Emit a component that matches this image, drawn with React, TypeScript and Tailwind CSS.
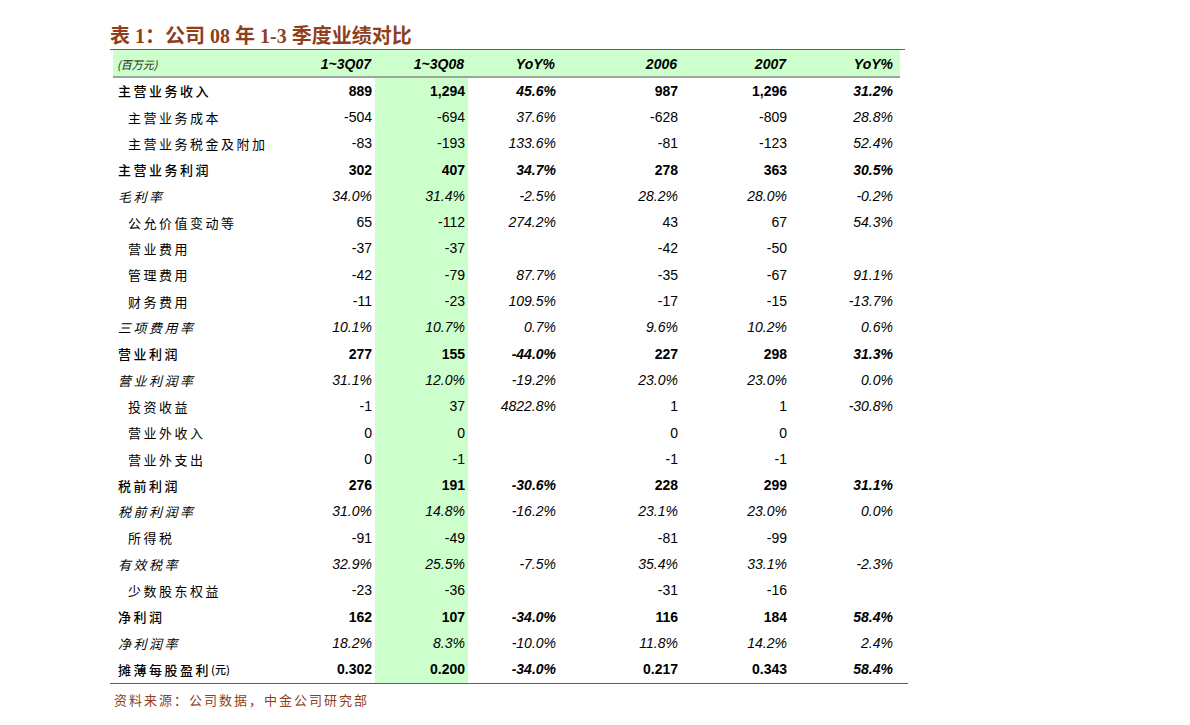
import React from "react";

type Row = { l: string; t: "b" | "n" | "i"; v: string[] };

const rows: Row[] = [
  { l: "主营业务收入", t: "b", v: ["889", "1,294", "45.6%", "987", "1,296", "31.2%"] },
  { l: "主营业务成本", t: "n", v: ["-504", "-694", "37.6%", "-628", "-809", "28.8%"] },
  { l: "主营业务税金及附加", t: "n", v: ["-83", "-193", "133.6%", "-81", "-123", "52.4%"] },
  { l: "主营业务利润", t: "b", v: ["302", "407", "34.7%", "278", "363", "30.5%"] },
  { l: "毛利率", t: "i", v: ["34.0%", "31.4%", "-2.5%", "28.2%", "28.0%", "-0.2%"] },
  { l: "公允价值变动等", t: "n", v: ["65", "-112", "274.2%", "43", "67", "54.3%"] },
  { l: "营业费用", t: "n", v: ["-37", "-37", "", "-42", "-50", ""] },
  { l: "管理费用", t: "n", v: ["-42", "-79", "87.7%", "-35", "-67", "91.1%"] },
  { l: "财务费用", t: "n", v: ["-11", "-23", "109.5%", "-17", "-15", "-13.7%"] },
  { l: "三项费用率", t: "i", v: ["10.1%", "10.7%", "0.7%", "9.6%", "10.2%", "0.6%"] },
  { l: "营业利润", t: "b", v: ["277", "155", "-44.0%", "227", "298", "31.3%"] },
  { l: "营业利润率", t: "i", v: ["31.1%", "12.0%", "-19.2%", "23.0%", "23.0%", "0.0%"] },
  { l: "投资收益", t: "n", v: ["-1", "37", "4822.8%", "1", "1", "-30.8%"] },
  { l: "营业外收入", t: "n", v: ["0", "0", "", "0", "0", ""] },
  { l: "营业外支出", t: "n", v: ["0", "-1", "", "-1", "-1", ""] },
  { l: "税前利润", t: "b", v: ["276", "191", "-30.6%", "228", "299", "31.1%"] },
  { l: "税前利润率", t: "i", v: ["31.0%", "14.8%", "-16.2%", "23.1%", "23.0%", "0.0%"] },
  { l: "所得税", t: "n", v: ["-91", "-49", "", "-81", "-99", ""] },
  { l: "有效税率", t: "i", v: ["32.9%", "25.5%", "-7.5%", "35.4%", "33.1%", "-2.3%"] },
  { l: "少数股东权益", t: "n", v: ["-23", "-36", "", "-31", "-16", ""] },
  { l: "净利润", t: "b", v: ["162", "107", "-34.0%", "116", "184", "58.4%"] },
  { l: "净利润率", t: "i", v: ["18.2%", "8.3%", "-10.0%", "11.8%", "14.2%", "2.4%"] },
  { l: "摊薄每股盈利", t: "b", v: ["0.302", "0.200", "-34.0%", "0.217", "0.343", "58.4%"] },
];

const headers = ["1~3Q07", "1~3Q08", "YoY%", "2006", "2007", "YoY%"];

const cjk = "font-['Noto_Sans_CJK_SC',sans-serif]";
const num = "font-['Liberation_Sans','Noto_Sans_CJK_SC',sans-serif]";

export default function App() {
  return (
    <div className="w-[1190px] h-[725px] bg-white pl-[110px] pt-[21px] text-black">
      <div className="w-[795px] h-[29px] border-b border-[#9c4a24] flex items-start pt-[3px]">
        <div className="font-['Liberation_Serif','Noto_Sans_CJK_SC',serif] font-bold text-[20px] leading-[24px] text-[#8f3f1c]">
          表 1：公司 08 年 1-3 季度业绩对比
        </div>
      </div>
      <div className="w-[798px] border-b border-[#9c4a24] pl-[3px]">
        <div className="grid grid-cols-[167px_95px_93px_91px_122px_109px_110px]">
          <div className={`bg-[#ccffcc] h-[28px] pt-[2px] border-b-2 border-[#9aa89a] flex items-center pl-[4px] italic text-[11px] ${cjk} text-[#222]`}>
            (百万元)
          </div>
          {headers.map((h, i) => (
            <div
              key={i}
              className={`bg-[#ccffcc] h-[28px] pt-[2px] border-b-2 border-[#9aa89a] flex items-center justify-end ${i === 5 ? "pr-[7px]" : "pr-[4px]"} italic font-bold text-[14px] ${num}`}
            >
              {h}
            </div>
          ))}
          {rows.map((r, ri) => (
            <React.Fragment key={ri}>
              <div
                className={`h-[26.3px] flex items-center ${r.t === "n" ? "pl-[15px]" : "pl-[5px]"} ${r.t === "i" ? "italic" : ""} ${r.t === "b" ? "font-medium" : "font-normal"} text-[13px] tracking-[2.5px] ${cjk}`}
              >
                {r.l}
                {ri === rows.length - 1 && <span className="text-[11px] tracking-normal">(元)</span>}
              </div>
              {r.v.map((v, ci) => {
                const isYoy = ci === 2 || ci === 5;
                const italic = r.t === "i" || isYoy;
                const bold = r.t === "b";
                return (
                  <div
                    key={ci}
                    className={`h-[26.3px] flex items-center justify-end ${ci === 5 ? "pr-[7px]" : "pr-[3px]"} ${ci === 1 ? "bg-[#ccffcc]" : ""} ${italic ? "italic" : ""} ${bold ? "font-bold" : ""} text-[14px] ${num}`}
                  >
                    {v}
                  </div>
                );
              })}
            </React.Fragment>
          ))}
        </div>
      </div>
      <div className={`pl-[4px] pt-[8px] text-[13px] leading-[16px] tracking-[2px] text-[#8f3f1c] ${cjk}`}>
        资料来源：公司数据，中金公司研究部
      </div>
    </div>
  );
}
